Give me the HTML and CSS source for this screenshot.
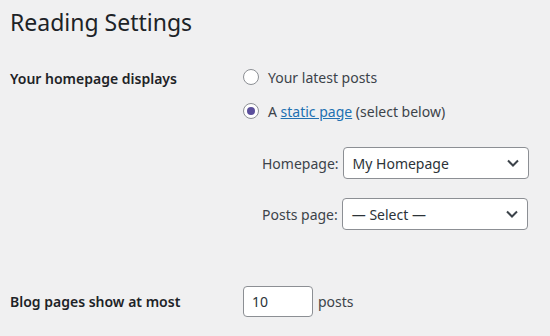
FILE: index.html
```html
<!DOCTYPE html>
<html lang="en">
<head>
    <meta charset="UTF-8">
    <meta name="viewport" content="width=device-width, initial-scale=1.0">
    <title>Reading Settings</title>
    <link rel="stylesheet" href="styles.css">
</head>
<body>
    <div class="wrap">
        <h1>Reading Settings</h1>

        <div class="row row-front">
            <div class="row-label">Your homepage displays</div>
            <div class="row-field">
                <label class="radio-line">
                    <span class="radio"></span>
                    Your latest posts
                </label>
                <label class="radio-line">
                    <span class="radio checked"></span>
                    A&nbsp;<a href="#">static page</a>&nbsp;(select below)
                </label>

                <div class="page-pick">
                    <div class="pick-line">
                        <span class="pick-label">Homepage:</span>
                        <div class="select">
                            <span>My Homepage</span>
                            <svg width="14" height="14" viewBox="0 0 14 14"><path d="M2 4.5 L7 9.5 L12 4.5" fill="none" stroke="#3c434a" stroke-width="2"/></svg>
                        </div>
                    </div>
                    <div class="pick-line">
                        <span class="pick-label">Posts page:</span>
                        <div class="select">
                            <span>— Select —</span>
                            <svg width="14" height="14" viewBox="0 0 14 14"><path d="M2 4.5 L7 9.5 L12 4.5" fill="none" stroke="#3c434a" stroke-width="2"/></svg>
                        </div>
                    </div>
                </div>
            </div>
        </div>

        <div class="row row-posts">
            <div class="row-label">Blog pages show at most</div>
            <div class="row-field inline">
                <div class="number">10</div>
                <span class="unit">posts</span>
            </div>
        </div>
    </div>
</body>
</html>
```

FILE: styles.css
```css
body {
    margin: 0;
    background: #f0f0f1;
    color: #1d2327;
    font-family: "Noto Sans", "Open Sans", sans-serif;
    font-size: 14px;
}

.wrap {
    padding: 0 10px;
}

h1 {
    font-size: 23px;
    font-weight: 400;
    line-height: 30px;
    margin: 0;
    padding: 7px 0 0;
}

.row {
    display: flex;
}
.row-label {
    width: 233px;
    font-weight: 600;
    line-height: 20px;
}
.row-front {
    margin-top: 23px;
}
.row-front .row-label {
    padding-top: 9px;
}

.radio-line {
    display: flex;
    align-items: center;
    height: 34px;
    color: #3c434a;
}
.radio-line a {
    color: #2271b1;
}
.radio {
    width: 16px;
    height: 16px;
    box-sizing: border-box;
    border: 1px solid #8c8f94;
    border-radius: 50%;
    background: #fff;
    margin-right: 9px;
    display: flex;
    align-items: center;
    justify-content: center;
}
.radio.checked::after {
    content: "";
    width: 8px;
    height: 8px;
    border-radius: 50%;
    background: #5b4f9c;
}

.page-pick {
    padding: 19px 0 0 19px;
}
.pick-line {
    display: flex;
    align-items: center;
    color: #3c434a;
    margin-bottom: 19px;
}
.pick-label {
    margin-right: 4px;
}
.select {
    width: 186px;
    height: 32px;
    box-sizing: border-box;
    border: 1px solid #8c8f94;
    border-radius: 4px;
    background: #fff;
    display: flex;
    align-items: center;
    justify-content: space-between;
    padding: 0 8px 0 9px;
    color: #2c3338;
}

.row-posts {
    margin-top: 37px;
    align-items: center;
}
.row-field.inline {
    display: flex;
    align-items: center;
}
.number {
    width: 70px;
    height: 31px;
    box-sizing: border-box;
    border: 1px solid #8c8f94;
    border-radius: 4px;
    background: #fff;
    padding: 0 8px;
    line-height: 29px;
    color: #2c3338;
}
.unit {
    margin-left: 5px;
    color: #3c434a;
}
```
